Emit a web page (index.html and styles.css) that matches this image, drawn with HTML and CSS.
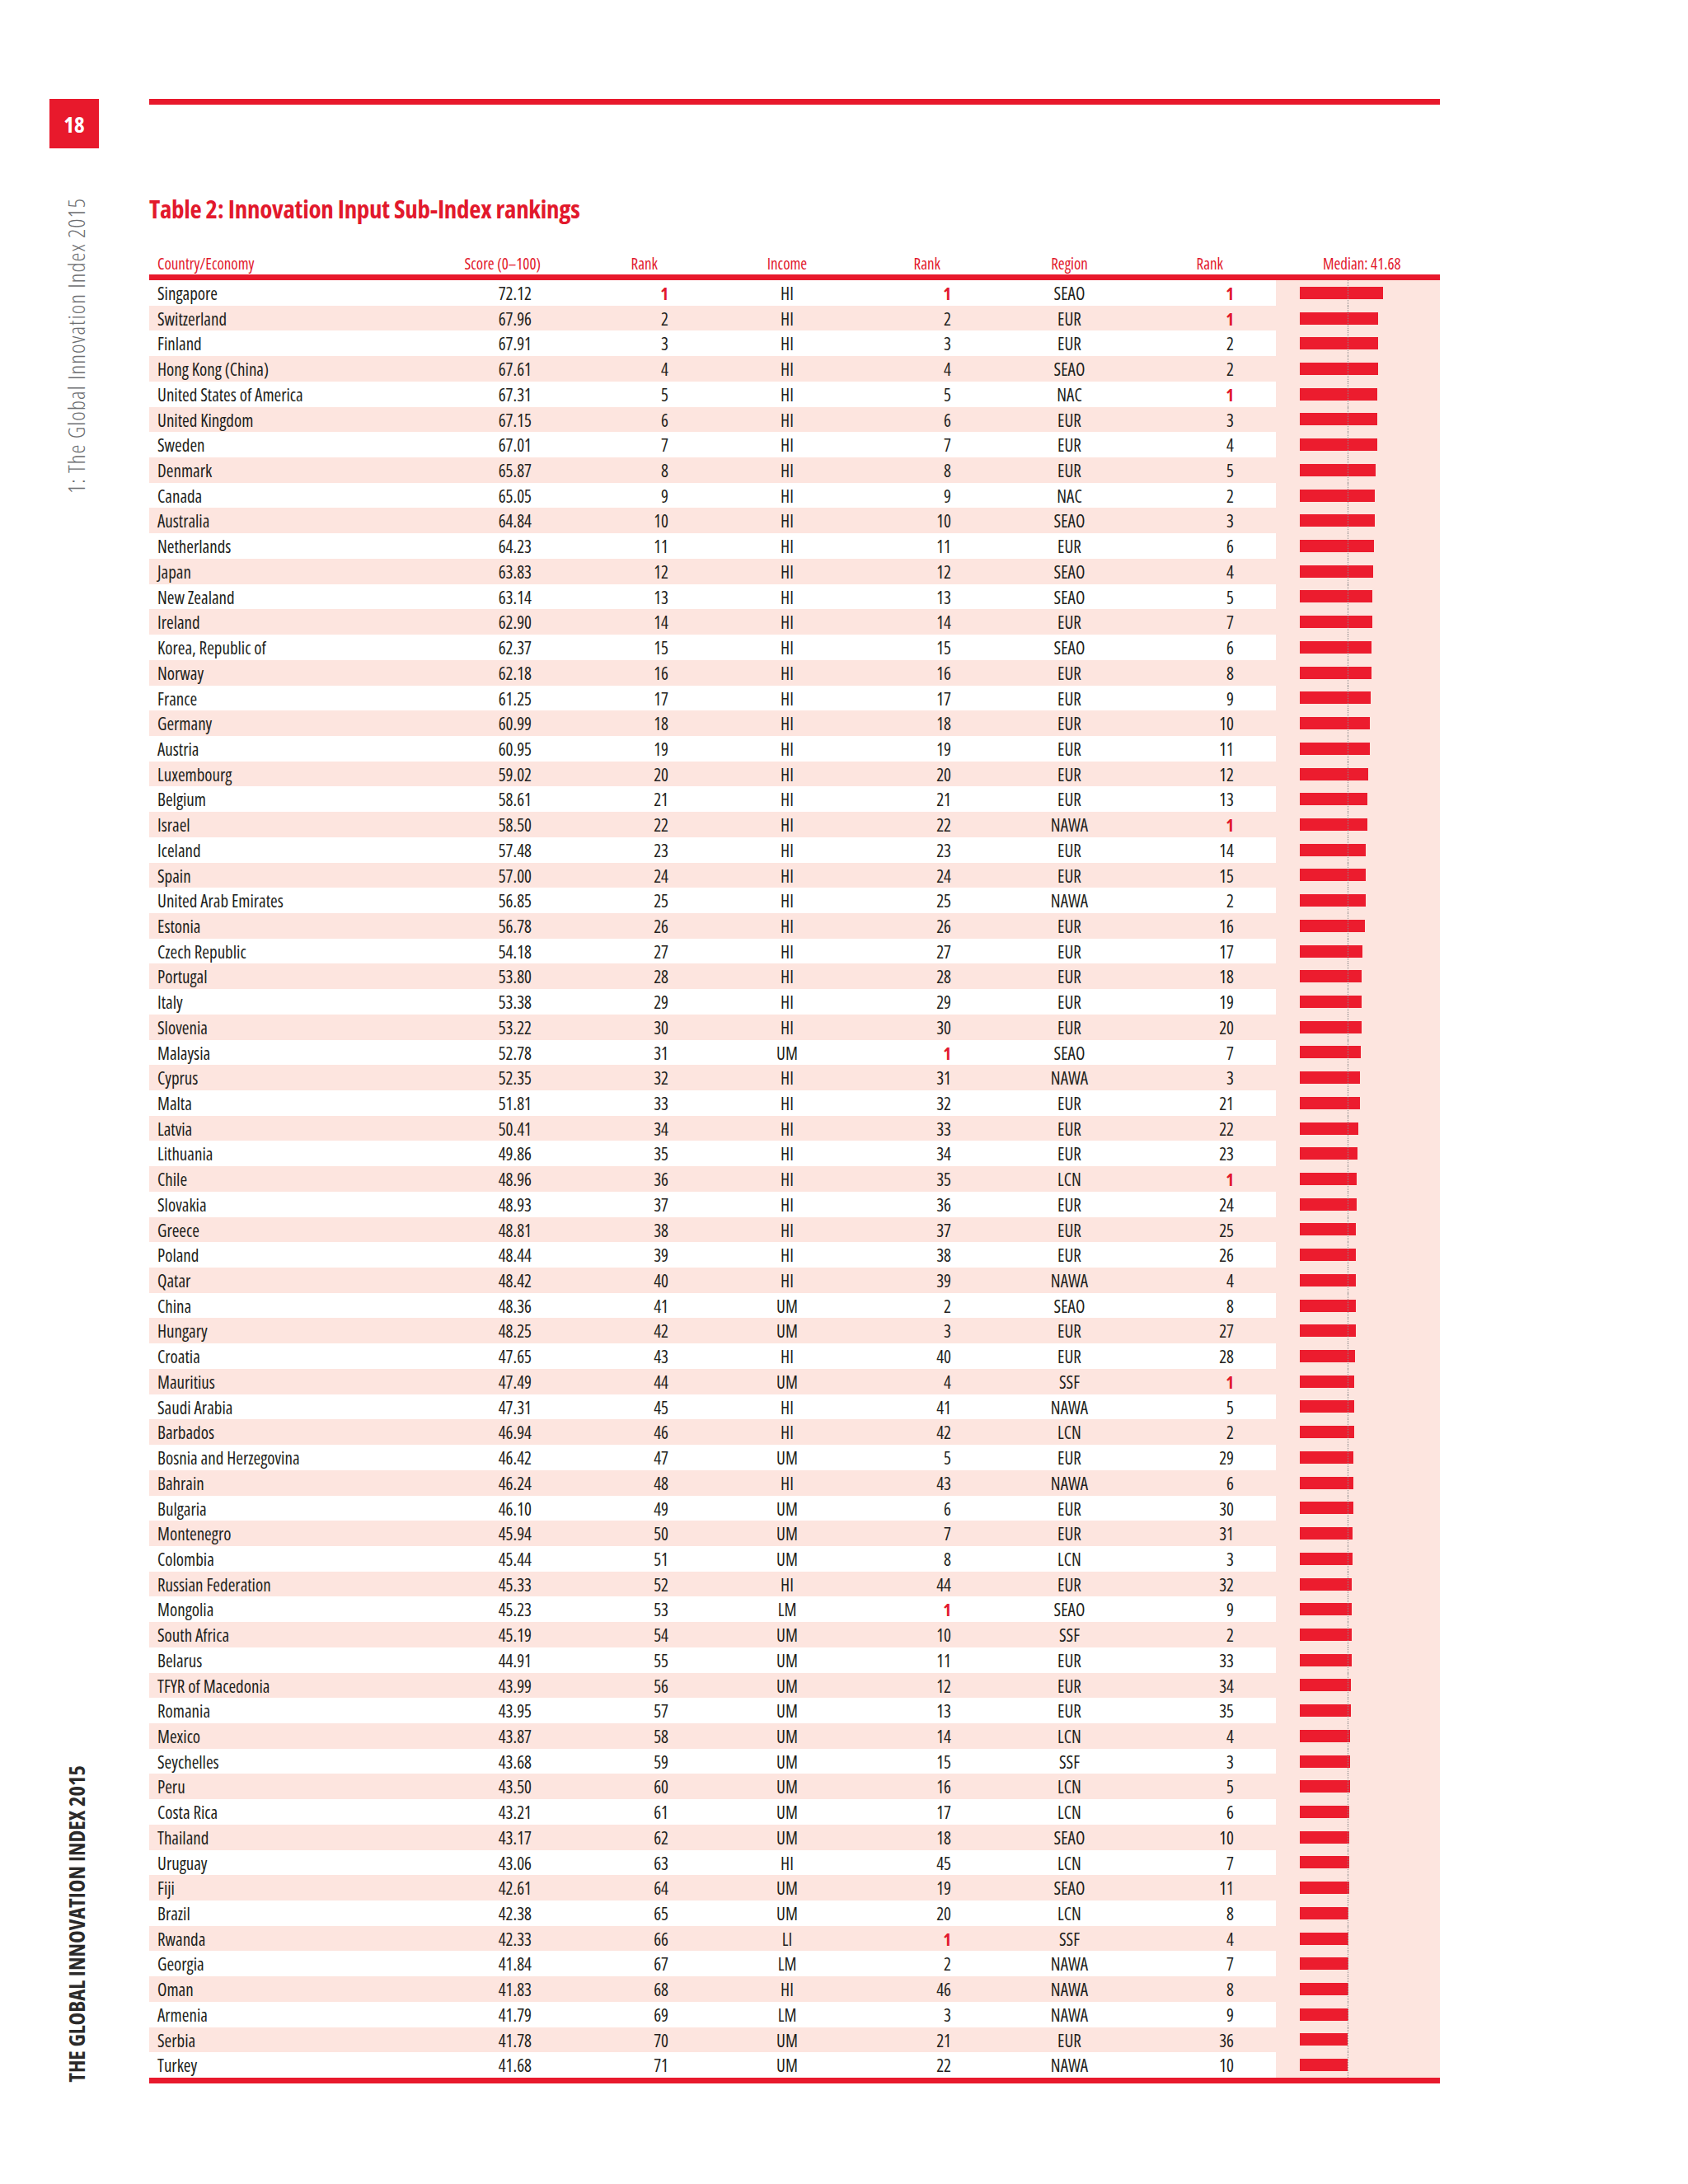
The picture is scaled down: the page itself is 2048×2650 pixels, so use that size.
FILE: index.html
```html
<!DOCTYPE html>
<html lang="en">
<head>
<meta charset="utf-8">
<title>Table 2: Innovation Input Sub-Index rankings</title>
<link rel="stylesheet" href="styles.css">
</head>
<body>
<div class="page">
  <aside class="side">
    <div class="pageno">18</div>
    <div class="runner">1: The Global Innovation Index 2015</div>
    <div class="spacer"></div>
    <div class="brand">THE GLOBAL INNOVATION INDEX 2015</div>
  </aside>
  <main class="main">
    <div class="rule-top"></div>
    <h1 class="title">Table 2: Innovation Input Sub-Index rankings</h1>
    <div class="head">
      <span class="c1">Country/Economy</span><span class="c2">Score (0–100)</span><span class="c3">Rank</span><span class="c4">Income</span><span class="c5">Rank</span><span class="c6">Region</span><span class="c7">Rank</span><span class="c8">Median: 41.68</span>
    </div>
    <div class="tbody">
      <div class="row"><span class="c1">Singapore</span><span class="c2">72.12</span><span class="c3 top">1</span><span class="c4">HI</span><span class="c5 top">1</span><span class="c6">SEAO</span><span class="c7 top">1</span><span class="c8"><i class="bar" style="width:100.97px"></i></span></div>
      <div class="row"><span class="c1">Switzerland</span><span class="c2">67.96</span><span class="c3">2</span><span class="c4">HI</span><span class="c5">2</span><span class="c6">EUR</span><span class="c7 top">1</span><span class="c8"><i class="bar" style="width:95.14px"></i></span></div>
      <div class="row"><span class="c1">Finland</span><span class="c2">67.91</span><span class="c3">3</span><span class="c4">HI</span><span class="c5">3</span><span class="c6">EUR</span><span class="c7">2</span><span class="c8"><i class="bar" style="width:95.07px"></i></span></div>
      <div class="row"><span class="c1">Hong Kong (China)</span><span class="c2">67.61</span><span class="c3">4</span><span class="c4">HI</span><span class="c5">4</span><span class="c6">SEAO</span><span class="c7">2</span><span class="c8"><i class="bar" style="width:94.65px"></i></span></div>
      <div class="row"><span class="c1">United States of America</span><span class="c2">67.31</span><span class="c3">5</span><span class="c4">HI</span><span class="c5">5</span><span class="c6">NAC</span><span class="c7 top">1</span><span class="c8"><i class="bar" style="width:94.23px"></i></span></div>
      <div class="row"><span class="c1">United Kingdom</span><span class="c2">67.15</span><span class="c3">6</span><span class="c4">HI</span><span class="c5">6</span><span class="c6">EUR</span><span class="c7">3</span><span class="c8"><i class="bar" style="width:94.01px"></i></span></div>
      <div class="row"><span class="c1">Sweden</span><span class="c2">67.01</span><span class="c3">7</span><span class="c4">HI</span><span class="c5">7</span><span class="c6">EUR</span><span class="c7">4</span><span class="c8"><i class="bar" style="width:93.81px"></i></span></div>
      <div class="row"><span class="c1">Denmark</span><span class="c2">65.87</span><span class="c3">8</span><span class="c4">HI</span><span class="c5">8</span><span class="c6">EUR</span><span class="c7">5</span><span class="c8"><i class="bar" style="width:92.22px"></i></span></div>
      <div class="row"><span class="c1">Canada</span><span class="c2">65.05</span><span class="c3">9</span><span class="c4">HI</span><span class="c5">9</span><span class="c6">NAC</span><span class="c7">2</span><span class="c8"><i class="bar" style="width:91.07px"></i></span></div>
      <div class="row"><span class="c1">Australia</span><span class="c2">64.84</span><span class="c3">10</span><span class="c4">HI</span><span class="c5">10</span><span class="c6">SEAO</span><span class="c7">3</span><span class="c8"><i class="bar" style="width:90.78px"></i></span></div>
      <div class="row"><span class="c1">Netherlands</span><span class="c2">64.23</span><span class="c3">11</span><span class="c4">HI</span><span class="c5">11</span><span class="c6">EUR</span><span class="c7">6</span><span class="c8"><i class="bar" style="width:89.92px"></i></span></div>
      <div class="row"><span class="c1">Japan</span><span class="c2">63.83</span><span class="c3">12</span><span class="c4">HI</span><span class="c5">12</span><span class="c6">SEAO</span><span class="c7">4</span><span class="c8"><i class="bar" style="width:89.36px"></i></span></div>
      <div class="row"><span class="c1">New Zealand</span><span class="c2">63.14</span><span class="c3">13</span><span class="c4">HI</span><span class="c5">13</span><span class="c6">SEAO</span><span class="c7">5</span><span class="c8"><i class="bar" style="width:88.40px"></i></span></div>
      <div class="row"><span class="c1">Ireland</span><span class="c2">62.90</span><span class="c3">14</span><span class="c4">HI</span><span class="c5">14</span><span class="c6">EUR</span><span class="c7">7</span><span class="c8"><i class="bar" style="width:88.06px"></i></span></div>
      <div class="row"><span class="c1">Korea, Republic of</span><span class="c2">62.37</span><span class="c3">15</span><span class="c4">HI</span><span class="c5">15</span><span class="c6">SEAO</span><span class="c7">6</span><span class="c8"><i class="bar" style="width:87.32px"></i></span></div>
      <div class="row"><span class="c1">Norway</span><span class="c2">62.18</span><span class="c3">16</span><span class="c4">HI</span><span class="c5">16</span><span class="c6">EUR</span><span class="c7">8</span><span class="c8"><i class="bar" style="width:87.05px"></i></span></div>
      <div class="row"><span class="c1">France</span><span class="c2">61.25</span><span class="c3">17</span><span class="c4">HI</span><span class="c5">17</span><span class="c6">EUR</span><span class="c7">9</span><span class="c8"><i class="bar" style="width:85.75px"></i></span></div>
      <div class="row"><span class="c1">Germany</span><span class="c2">60.99</span><span class="c3">18</span><span class="c4">HI</span><span class="c5">18</span><span class="c6">EUR</span><span class="c7">10</span><span class="c8"><i class="bar" style="width:85.39px"></i></span></div>
      <div class="row"><span class="c1">Austria</span><span class="c2">60.95</span><span class="c3">19</span><span class="c4">HI</span><span class="c5">19</span><span class="c6">EUR</span><span class="c7">11</span><span class="c8"><i class="bar" style="width:85.33px"></i></span></div>
      <div class="row"><span class="c1">Luxembourg</span><span class="c2">59.02</span><span class="c3">20</span><span class="c4">HI</span><span class="c5">20</span><span class="c6">EUR</span><span class="c7">12</span><span class="c8"><i class="bar" style="width:82.63px"></i></span></div>
      <div class="row"><span class="c1">Belgium</span><span class="c2">58.61</span><span class="c3">21</span><span class="c4">HI</span><span class="c5">21</span><span class="c6">EUR</span><span class="c7">13</span><span class="c8"><i class="bar" style="width:82.05px"></i></span></div>
      <div class="row"><span class="c1">Israel</span><span class="c2">58.50</span><span class="c3">22</span><span class="c4">HI</span><span class="c5">22</span><span class="c6">NAWA</span><span class="c7 top">1</span><span class="c8"><i class="bar" style="width:81.90px"></i></span></div>
      <div class="row"><span class="c1">Iceland</span><span class="c2">57.48</span><span class="c3">23</span><span class="c4">HI</span><span class="c5">23</span><span class="c6">EUR</span><span class="c7">14</span><span class="c8"><i class="bar" style="width:80.47px"></i></span></div>
      <div class="row"><span class="c1">Spain</span><span class="c2">57.00</span><span class="c3">24</span><span class="c4">HI</span><span class="c5">24</span><span class="c6">EUR</span><span class="c7">15</span><span class="c8"><i class="bar" style="width:79.80px"></i></span></div>
      <div class="row"><span class="c1">United Arab Emirates</span><span class="c2">56.85</span><span class="c3">25</span><span class="c4">HI</span><span class="c5">25</span><span class="c6">NAWA</span><span class="c7">2</span><span class="c8"><i class="bar" style="width:79.59px"></i></span></div>
      <div class="row"><span class="c1">Estonia</span><span class="c2">56.78</span><span class="c3">26</span><span class="c4">HI</span><span class="c5">26</span><span class="c6">EUR</span><span class="c7">16</span><span class="c8"><i class="bar" style="width:79.49px"></i></span></div>
      <div class="row"><span class="c1">Czech Republic</span><span class="c2">54.18</span><span class="c3">27</span><span class="c4">HI</span><span class="c5">27</span><span class="c6">EUR</span><span class="c7">17</span><span class="c8"><i class="bar" style="width:75.85px"></i></span></div>
      <div class="row"><span class="c1">Portugal</span><span class="c2">53.80</span><span class="c3">28</span><span class="c4">HI</span><span class="c5">28</span><span class="c6">EUR</span><span class="c7">18</span><span class="c8"><i class="bar" style="width:75.32px"></i></span></div>
      <div class="row"><span class="c1">Italy</span><span class="c2">53.38</span><span class="c3">29</span><span class="c4">HI</span><span class="c5">29</span><span class="c6">EUR</span><span class="c7">19</span><span class="c8"><i class="bar" style="width:74.73px"></i></span></div>
      <div class="row"><span class="c1">Slovenia</span><span class="c2">53.22</span><span class="c3">30</span><span class="c4">HI</span><span class="c5">30</span><span class="c6">EUR</span><span class="c7">20</span><span class="c8"><i class="bar" style="width:74.51px"></i></span></div>
      <div class="row"><span class="c1">Malaysia</span><span class="c2">52.78</span><span class="c3">31</span><span class="c4">UM</span><span class="c5 top">1</span><span class="c6">SEAO</span><span class="c7">7</span><span class="c8"><i class="bar" style="width:73.89px"></i></span></div>
      <div class="row"><span class="c1">Cyprus</span><span class="c2">52.35</span><span class="c3">32</span><span class="c4">HI</span><span class="c5">31</span><span class="c6">NAWA</span><span class="c7">3</span><span class="c8"><i class="bar" style="width:73.29px"></i></span></div>
      <div class="row"><span class="c1">Malta</span><span class="c2">51.81</span><span class="c3">33</span><span class="c4">HI</span><span class="c5">32</span><span class="c6">EUR</span><span class="c7">21</span><span class="c8"><i class="bar" style="width:72.53px"></i></span></div>
      <div class="row"><span class="c1">Latvia</span><span class="c2">50.41</span><span class="c3">34</span><span class="c4">HI</span><span class="c5">33</span><span class="c6">EUR</span><span class="c7">22</span><span class="c8"><i class="bar" style="width:70.57px"></i></span></div>
      <div class="row"><span class="c1">Lithuania</span><span class="c2">49.86</span><span class="c3">35</span><span class="c4">HI</span><span class="c5">34</span><span class="c6">EUR</span><span class="c7">23</span><span class="c8"><i class="bar" style="width:69.80px"></i></span></div>
      <div class="row"><span class="c1">Chile</span><span class="c2">48.96</span><span class="c3">36</span><span class="c4">HI</span><span class="c5">35</span><span class="c6">LCN</span><span class="c7 top">1</span><span class="c8"><i class="bar" style="width:68.54px"></i></span></div>
      <div class="row"><span class="c1">Slovakia</span><span class="c2">48.93</span><span class="c3">37</span><span class="c4">HI</span><span class="c5">36</span><span class="c6">EUR</span><span class="c7">24</span><span class="c8"><i class="bar" style="width:68.50px"></i></span></div>
      <div class="row"><span class="c1">Greece</span><span class="c2">48.81</span><span class="c3">38</span><span class="c4">HI</span><span class="c5">37</span><span class="c6">EUR</span><span class="c7">25</span><span class="c8"><i class="bar" style="width:68.33px"></i></span></div>
      <div class="row"><span class="c1">Poland</span><span class="c2">48.44</span><span class="c3">39</span><span class="c4">HI</span><span class="c5">38</span><span class="c6">EUR</span><span class="c7">26</span><span class="c8"><i class="bar" style="width:67.82px"></i></span></div>
      <div class="row"><span class="c1">Qatar</span><span class="c2">48.42</span><span class="c3">40</span><span class="c4">HI</span><span class="c5">39</span><span class="c6">NAWA</span><span class="c7">4</span><span class="c8"><i class="bar" style="width:67.79px"></i></span></div>
      <div class="row"><span class="c1">China</span><span class="c2">48.36</span><span class="c3">41</span><span class="c4">UM</span><span class="c5">2</span><span class="c6">SEAO</span><span class="c7">8</span><span class="c8"><i class="bar" style="width:67.70px"></i></span></div>
      <div class="row"><span class="c1">Hungary</span><span class="c2">48.25</span><span class="c3">42</span><span class="c4">UM</span><span class="c5">3</span><span class="c6">EUR</span><span class="c7">27</span><span class="c8"><i class="bar" style="width:67.55px"></i></span></div>
      <div class="row"><span class="c1">Croatia</span><span class="c2">47.65</span><span class="c3">43</span><span class="c4">HI</span><span class="c5">40</span><span class="c6">EUR</span><span class="c7">28</span><span class="c8"><i class="bar" style="width:66.71px"></i></span></div>
      <div class="row"><span class="c1">Mauritius</span><span class="c2">47.49</span><span class="c3">44</span><span class="c4">UM</span><span class="c5">4</span><span class="c6">SSF</span><span class="c7 top">1</span><span class="c8"><i class="bar" style="width:66.49px"></i></span></div>
      <div class="row"><span class="c1">Saudi Arabia</span><span class="c2">47.31</span><span class="c3">45</span><span class="c4">HI</span><span class="c5">41</span><span class="c6">NAWA</span><span class="c7">5</span><span class="c8"><i class="bar" style="width:66.23px"></i></span></div>
      <div class="row"><span class="c1">Barbados</span><span class="c2">46.94</span><span class="c3">46</span><span class="c4">HI</span><span class="c5">42</span><span class="c6">LCN</span><span class="c7">2</span><span class="c8"><i class="bar" style="width:65.72px"></i></span></div>
      <div class="row"><span class="c1">Bosnia and Herzegovina</span><span class="c2">46.42</span><span class="c3">47</span><span class="c4">UM</span><span class="c5">5</span><span class="c6">EUR</span><span class="c7">29</span><span class="c8"><i class="bar" style="width:64.99px"></i></span></div>
      <div class="row"><span class="c1">Bahrain</span><span class="c2">46.24</span><span class="c3">48</span><span class="c4">HI</span><span class="c5">43</span><span class="c6">NAWA</span><span class="c7">6</span><span class="c8"><i class="bar" style="width:64.74px"></i></span></div>
      <div class="row"><span class="c1">Bulgaria</span><span class="c2">46.10</span><span class="c3">49</span><span class="c4">UM</span><span class="c5">6</span><span class="c6">EUR</span><span class="c7">30</span><span class="c8"><i class="bar" style="width:64.54px"></i></span></div>
      <div class="row"><span class="c1">Montenegro</span><span class="c2">45.94</span><span class="c3">50</span><span class="c4">UM</span><span class="c5">7</span><span class="c6">EUR</span><span class="c7">31</span><span class="c8"><i class="bar" style="width:64.32px"></i></span></div>
      <div class="row"><span class="c1">Colombia</span><span class="c2">45.44</span><span class="c3">51</span><span class="c4">UM</span><span class="c5">8</span><span class="c6">LCN</span><span class="c7">3</span><span class="c8"><i class="bar" style="width:63.62px"></i></span></div>
      <div class="row"><span class="c1">Russian Federation</span><span class="c2">45.33</span><span class="c3">52</span><span class="c4">HI</span><span class="c5">44</span><span class="c6">EUR</span><span class="c7">32</span><span class="c8"><i class="bar" style="width:63.46px"></i></span></div>
      <div class="row"><span class="c1">Mongolia</span><span class="c2">45.23</span><span class="c3">53</span><span class="c4">LM</span><span class="c5 top">1</span><span class="c6">SEAO</span><span class="c7">9</span><span class="c8"><i class="bar" style="width:63.32px"></i></span></div>
      <div class="row"><span class="c1">South Africa</span><span class="c2">45.19</span><span class="c3">54</span><span class="c4">UM</span><span class="c5">10</span><span class="c6">SSF</span><span class="c7">2</span><span class="c8"><i class="bar" style="width:63.27px"></i></span></div>
      <div class="row"><span class="c1">Belarus</span><span class="c2">44.91</span><span class="c3">55</span><span class="c4">UM</span><span class="c5">11</span><span class="c6">EUR</span><span class="c7">33</span><span class="c8"><i class="bar" style="width:62.87px"></i></span></div>
      <div class="row"><span class="c1">TFYR of Macedonia</span><span class="c2">43.99</span><span class="c3">56</span><span class="c4">UM</span><span class="c5">12</span><span class="c6">EUR</span><span class="c7">34</span><span class="c8"><i class="bar" style="width:61.59px"></i></span></div>
      <div class="row"><span class="c1">Romania</span><span class="c2">43.95</span><span class="c3">57</span><span class="c4">UM</span><span class="c5">13</span><span class="c6">EUR</span><span class="c7">35</span><span class="c8"><i class="bar" style="width:61.53px"></i></span></div>
      <div class="row"><span class="c1">Mexico</span><span class="c2">43.87</span><span class="c3">58</span><span class="c4">UM</span><span class="c5">14</span><span class="c6">LCN</span><span class="c7">4</span><span class="c8"><i class="bar" style="width:61.42px"></i></span></div>
      <div class="row"><span class="c1">Seychelles</span><span class="c2">43.68</span><span class="c3">59</span><span class="c4">UM</span><span class="c5">15</span><span class="c6">SSF</span><span class="c7">3</span><span class="c8"><i class="bar" style="width:61.15px"></i></span></div>
      <div class="row"><span class="c1">Peru</span><span class="c2">43.50</span><span class="c3">60</span><span class="c4">UM</span><span class="c5">16</span><span class="c6">LCN</span><span class="c7">5</span><span class="c8"><i class="bar" style="width:60.90px"></i></span></div>
      <div class="row"><span class="c1">Costa Rica</span><span class="c2">43.21</span><span class="c3">61</span><span class="c4">UM</span><span class="c5">17</span><span class="c6">LCN</span><span class="c7">6</span><span class="c8"><i class="bar" style="width:60.49px"></i></span></div>
      <div class="row"><span class="c1">Thailand</span><span class="c2">43.17</span><span class="c3">62</span><span class="c4">UM</span><span class="c5">18</span><span class="c6">SEAO</span><span class="c7">10</span><span class="c8"><i class="bar" style="width:60.44px"></i></span></div>
      <div class="row"><span class="c1">Uruguay</span><span class="c2">43.06</span><span class="c3">63</span><span class="c4">HI</span><span class="c5">45</span><span class="c6">LCN</span><span class="c7">7</span><span class="c8"><i class="bar" style="width:60.28px"></i></span></div>
      <div class="row"><span class="c1">Fiji</span><span class="c2">42.61</span><span class="c3">64</span><span class="c4">UM</span><span class="c5">19</span><span class="c6">SEAO</span><span class="c7">11</span><span class="c8"><i class="bar" style="width:59.65px"></i></span></div>
      <div class="row"><span class="c1">Brazil</span><span class="c2">42.38</span><span class="c3">65</span><span class="c4">UM</span><span class="c5">20</span><span class="c6">LCN</span><span class="c7">8</span><span class="c8"><i class="bar" style="width:59.33px"></i></span></div>
      <div class="row"><span class="c1">Rwanda</span><span class="c2">42.33</span><span class="c3">66</span><span class="c4">LI</span><span class="c5 top">1</span><span class="c6">SSF</span><span class="c7">4</span><span class="c8"><i class="bar" style="width:59.26px"></i></span></div>
      <div class="row"><span class="c1">Georgia</span><span class="c2">41.84</span><span class="c3">67</span><span class="c4">LM</span><span class="c5">2</span><span class="c6">NAWA</span><span class="c7">7</span><span class="c8"><i class="bar" style="width:58.58px"></i></span></div>
      <div class="row"><span class="c1">Oman</span><span class="c2">41.83</span><span class="c3">68</span><span class="c4">HI</span><span class="c5">46</span><span class="c6">NAWA</span><span class="c7">8</span><span class="c8"><i class="bar" style="width:58.56px"></i></span></div>
      <div class="row"><span class="c1">Armenia</span><span class="c2">41.79</span><span class="c3">69</span><span class="c4">LM</span><span class="c5">3</span><span class="c6">NAWA</span><span class="c7">9</span><span class="c8"><i class="bar" style="width:58.51px"></i></span></div>
      <div class="row"><span class="c1">Serbia</span><span class="c2">41.78</span><span class="c3">70</span><span class="c4">UM</span><span class="c5">21</span><span class="c6">EUR</span><span class="c7">36</span><span class="c8"><i class="bar" style="width:58.49px"></i></span></div>
      <div class="row"><span class="c1">Turkey</span><span class="c2">41.68</span><span class="c3">71</span><span class="c4">UM</span><span class="c5">22</span><span class="c6">NAWA</span><span class="c7">10</span><span class="c8"><i class="bar" style="width:58.35px"></i></span></div>
    </div>
  </main>
</div>
</body>
</html>
```
FILE: styles.css
```css
html, body {
  margin: 0;
  padding: 0;
  background: #ffffff;
}

body {
  font-family: "Open Sans", "DejaVu Sans Condensed", sans-serif;
  font-stretch: 75%;
  color: #231f20;
}

.page {
  display: flex;
  align-items: stretch;
  width: 2048px;
}

/* ---------- left margin ---------- */
.side {
  width: 181px;
  flex: none;
  display: flex;
  flex-direction: column;
  align-items: flex-start;
  padding-top: 120px;
  box-sizing: border-box;
}

.pageno {
  margin-left: 60px;
  width: 60px;
  height: 60px;
  background: #e8192c;
  color: #ffffff;
  font-weight: bold;
  font-size: 27px;
  display: flex;
  align-items: center;
  justify-content: center;
}

.runner,
.brand {
  writing-mode: vertical-rl;
  transform: rotate(180deg);
  margin-left: 79px;
  line-height: 28px;
  white-space: nowrap;
}

.runner {
  margin-top: 60px;
  font-size: 27.5px;
  letter-spacing: 1.05px;
  color: #6d6e71;
  font-weight: 300;
}

.spacer {
  flex: 1;
}

.brand {
  margin-bottom: 2px;
  font-size: 26.6px;
  color: #2b2a2a;
  font-weight: bold;
}

/* ---------- main column ---------- */
.main {
  width: 1566px;
  flex: none;
  padding-top: 120px;
}

.rule-top {
  height: 7px;
  background: #e8192c;
}

.title {
  margin: 111px 0 0;
  font-size: 31px;
  line-height: 31px;
  letter-spacing: -0.3px;
  font-weight: bold;
  color: #e2192c;
  white-space: nowrap;
}

.head,
.row {
  display: grid;
  grid-template-columns: 379px 100px 170px 250px 120px 195px 153px 199px;
  white-space: nowrap;
}

.head {
  margin-top: 39px;
  height: 25px;
  border-bottom: 7px solid #e8192c;
  font-size: 19px;
  line-height: 24px;
  color: #e2192c;
}

.tbody {
  border-bottom: 7px solid #e8192c;
}

.row {
  height: 30.73px;
  font-size: 21px;
}

.row > span {
  box-sizing: border-box;
  padding-top: 2px;
  line-height: 28.73px;
}

.row:nth-child(even) {
  background: #fde5df;
}

.c1 { padding-left: 10px; }
.c2 { text-align: right; padding-right: 15px; }
.c3 { text-align: right; padding-right: 19px; }
.c4 { text-align: center; }
.c5 { text-align: right; padding-right: 46px; }
.c6 { text-align: center; }
.c7 { text-align: right; padding-right: 51px; }

.head .c2 { padding-right: 4px; }
.head .c3 { padding-right: 32px; }
.head .c5 { padding-right: 59px; }
.head .c7 { padding-right: 64px; }
.head .c8 { padding-left: 57px; }

.top {
  color: #e2192c;
  font-weight: bold;
}

.row > .c8 {
  position: relative;
  display: flex;
  align-items: center;
  padding: 0 0 0 29px;
  background: #fde5df;
}

.row > .c8::after {
  content: "";
  position: absolute;
  left: 87px;
  top: 0;
  bottom: 0;
  border-left: 1px dotted #8c8c8c;
}

.bar {
  display: block;
  height: 15px;
  background: #ec1c2e;
}
```
